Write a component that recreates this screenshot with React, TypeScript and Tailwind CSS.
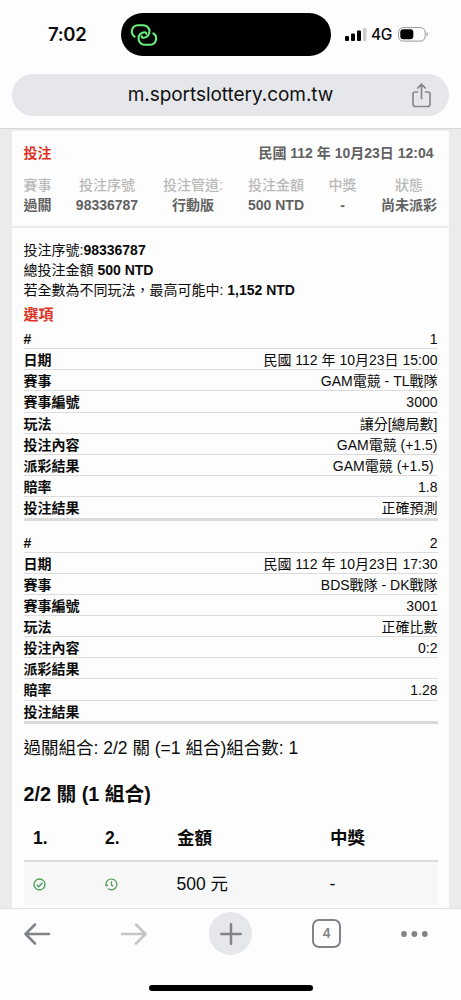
import type { ReactNode } from 'react';

const legs = [
  {
    id: 1,
    rows: [
      ['#', '1'],
      ['日期', '民國 112 年 10月23日 15:00'],
      ['賽事', 'GAM電競 - TL戰隊'],
      ['賽事編號', '3000'],
      ['玩法', '讓分[總局數]'],
      ['投注內容', 'GAM電競 (+1.5)'],
      ['派彩結果', 'GAM電競 (+1.5)\u00a0'],
      ['賠率', '1.8'],
      ['投注結果', '正確預測'],
    ],
  },
  {
    id: 2,
    rows: [
      ['#', '2'],
      ['日期', '民國 112 年 10月23日 17:30'],
      ['賽事', 'BDS戰隊 - DK戰隊'],
      ['賽事編號', '3001'],
      ['玩法', '正確比數'],
      ['投注內容', '0:2'],
      ['派彩結果', ''],
      ['賠率', '1.28'],
      ['投注結果', ''],
    ],
  },
];

function StatusBar() {
  return (
    <div className="flex h-[74px] items-start pt-[13px] font-['Inter']">
      <div className="w-[121px] pl-[48px] pt-[8px] text-[18.5px] font-semibold leading-[26px] tracking-[-0.3px]">7:02</div>
      <div className="flex h-[43px] w-[210px] shrink-0 items-center rounded-full bg-black pl-[9px]">
        <svg width="28" height="22" viewBox="0 0 28 22" fill="none" stroke="#6bf07b" strokeWidth="2.1" strokeLinecap="round">
          <path d="M4.6 12.6A6.200 6.200 0 0 1 7.700 1.300H13.300A6.200 6.200 0 0 1 13.300 13.700q-1.600 0-1.500-1.300" />
          <path d="M23.400 9.400A6.200 6.200 0 0 1 20.300 20.700H14.700A6.200 6.200 0 0 1 14.700 8.300q1.600 0 1.500 1.300" />
        </svg>
      </div>
      <svg className="ml-[14px] mt-[14px]" width="22" height="15" viewBox="0 0 22 15">
        <rect x="0" y="9" width="4" height="5" rx="1" />
        <rect x="6" y="6.5" width="4" height="7.5" rx="1" />
        <rect x="12" y="3.5" width="4" height="10.5" rx="1" />
        <rect x="18" y="1" width="3.5" height="13" rx="1" fill="#ccc" />
      </svg>
      <span className="ml-[4px] mt-[9px] text-[15.5px] font-medium leading-[26px] tracking-[-0.3px]">4G</span>
      <svg className="ml-[6px] mt-[14px]" width="31" height="15" viewBox="0 0 31 15">
        <rect x="0.6" y="0.6" width="26.5" height="13.5" rx="4.5" fill="none" stroke="#999" />
        <rect x="2.3" y="2.3" width="13" height="10" rx="3" />
        <path d="M28.600 5v4.600c1.800-.8 1.800-3.800 0-4.600z" fill="#999" />
      </svg>
    </div>
  );
}

function AddressBar() {
  return (
    <div className="mx-3 grid h-[42px] grid-cols-[1fr_auto_1fr] items-center rounded-full bg-[#e6e7eb]">
      <span className="col-start-2 whitespace-nowrap font-['Inter'] text-[19px] leading-6 tracking-[-0.05px] text-[#111]">
        m.sportslottery.com.tw
      </span>
      <svg className="mr-[18px] justify-self-end" width="19" height="25" viewBox="0 0 19 25" fill="none" stroke="#85898e" strokeWidth="1.7" strokeLinecap="round" strokeLinejoin="round">
        <path d="M5.500 9H3.300A2.300 2.300 0 0 0 1 11.300v9.900a2.300 2.300 0 0 0 2.300 2.300h12.400a2.300 2.300 0 0 0 2.300-2.300v-9.900A2.300 2.300 0 0 0 15.700 9h-2.200M9.500 15.500V1.300M5.700 5l3.800-3.800L13.300 5" />
      </svg>
    </div>
  );
}

function SummaryColumn({ label, children, className }: { label: string; children: ReactNode; className: string }) {
  return (
    <div className={className}>
      <p className="font-medium text-[#b9b9b9]">{label}</p>
      <p className="font-bold text-[#626262]">{children}</p>
    </div>
  );
}

function LegTable({ rows }: { rows: string[][] }) {
  return (
    <dl className="h-[192.5px] border-b-[3px] border-[#dadada] leading-[22px]">
      {rows.map(([label, value]) => (
        <div key={label} className="flex h-[21.15px] justify-between border-b border-[#dcdcdc] last:border-b-0">
          <dt className="font-bold">{label}</dt>
          <dd>{value}</dd>
        </div>
      ))}
    </dl>
  );
}

function BottomBar() {
  return (
    <div className="h-[92px] border-t border-[#e3e3e3] bg-[#fdfdfd]">
      <div className="flex items-center pt-[3px]">
        <svg className="ml-6" width="27" height="22" viewBox="0 0 27 22" fill="none" stroke="#808489" strokeWidth="2.5" strokeLinecap="round" strokeLinejoin="round">
          <path d="M25 11H1.500M11 1.500L1.500 11l9.500 9.500" />
        </svg>
        <svg className="ml-[69px]" width="27" height="22" viewBox="0 0 27 22" fill="none" stroke="#c5c5c7" strokeWidth="2.5" strokeLinecap="round" strokeLinejoin="round">
          <path d="M2 11h23.500M16 1.500l9.500 9.500-9.500 9.500" />
        </svg>
        <div className="ml-[62px] flex size-[43px] items-center justify-center rounded-full bg-[#e6e7eb]">
          <svg width="22" height="22" viewBox="0 0 22 22" stroke="#808489" strokeWidth="2.5" strokeLinecap="round">
            <path d="M11 1.300v19.400M1.300 11h19.400" />
          </svg>
        </div>
        <div className="ml-[60px] flex size-[29px] items-center justify-center rounded-[7px] border-2 border-[#808489] font-['Inter'] text-[13px] font-semibold text-[#808489]">
          4
        </div>
        <svg className="ml-[60px]" width="27" height="6" viewBox="0 0 27 6" fill="#808489">
          <circle cx="3" cy="3" r="2.9" />
          <circle cx="13.4" cy="3" r="2.9" />
          <circle cx="23.8" cy="3" r="2.9" />
        </svg>
      </div>
      <div className="mx-auto mt-[30px] h-[6px] w-[164px] rounded-full bg-black" />
    </div>
  );
}

export default function App() {
  return (
    <div className="flex h-[1000px] w-[461px] flex-col overflow-hidden bg-[#fdfdfd] font-['Liberation_Sans','Noto_Sans_CJK_TC',sans-serif] text-sm text-[#0c0c0c]">
      <header className="h-[129px] shrink-0 border-b border-[#d8d8d8]">
        <StatusBar />
        <AddressBar />
      </header>

      <main className="h-[779px] overflow-hidden bg-[#ebebeb] px-3 pt-[2px]">
        <section className="h-[97px] border-b-2 border-[#ebebeb] bg-[#fdfdfd] px-[11.5px] pt-[12px] leading-5">
          <div className="flex justify-between pr-[4px] font-bold">
            <h1 className="text-[#dd3226]">投注</h1>
            <p className="text-[#626262]">民國 112 年 10月23日 12:04</p>
          </div>
          <div className="mt-[12px] flex text-center">
            <SummaryColumn label="賽事" className="w-[28px]">過關</SummaryColumn>
            <SummaryColumn label="投注序號" className="ml-[24px] w-[63px]">98336787</SummaryColumn>
            <SummaryColumn label="投注管道:" className="ml-[24px] w-[61px]">行動版</SummaryColumn>
            <SummaryColumn label="投注金額" className="ml-[24px] w-[57px]">500 NTD</SummaryColumn>
            <SummaryColumn label="中獎" className="ml-[24px] w-[28px]">-</SummaryColumn>
            <SummaryColumn label="狀態" className="ml-[24px] w-[57px]">尚未派彩</SummaryColumn>
          </div>
        </section>

        <section className="h-[700px] bg-[#fdfdfd] px-[11.5px] pt-[12px]">
          <div className="leading-5">
            <p>投注序號:<b>98336787</b></p>
            <p>總投注金額 <b>500 NTD</b></p>
            <p>若全數為不同玩法，最高可能中: <b>1,152 NTD</b></p>
          </div>
          <h2 className="mt-[4px] h-[24px] text-[15px] font-bold leading-[22px] text-[#dd3226]">選項</h2>

          <div className="grid gap-[11px]">
            {legs.map((leg) => (
              <LegTable key={leg.id} rows={leg.rows} />
            ))}
          </div>

          <p className="mt-[12px] text-[17.5px] leading-6">過關組合: 2/2 關 (=1 組合)組合數: 1</p>
          <h3 className="mt-[20px] text-[19.75px] font-bold leading-7">2/2 關 (1 組合)</h3>

          <div className="mt-[9px] text-[17.5px]">
            <div className="grid h-[45px] grid-cols-[72px_72px_153px_1fr] items-center border-b-2 border-[#dadada] pl-[9.5px] font-bold">
              <span>1.</span>
              <span>2.</span>
              <span>金額</span>
              <span>中獎</span>
            </div>
            <div className="grid h-[43px] grid-cols-[72px_72px_153px_1fr] items-center bg-[#f7f7f7] pl-[9px] pt-[2px]">
              <svg width="13" height="13" viewBox="0 0 13 13" fill="none" stroke="#43a354" strokeWidth="1.3">
                <circle cx="6.5" cy="6.5" r="5.5" />
                <path d="M3.800 6.700l2 2 3.700-4" />
              </svg>
              <svg width="13" height="13" viewBox="0 0 13 13" fill="none" stroke="#4d995b" strokeWidth="1.2">
                <path d="M1.200 7.800a5.400 5.400 0 1 1 1.700 2.700M.3 6.300l1 1.600 1.600-1M6.500 3.300v3.800l1.800 1.200" />
              </svg>
              <span>500 元</span>
              <span>-</span>
            </div>
          </div>
        </section>
      </main>

      <BottomBar />
    </div>
  );
}
